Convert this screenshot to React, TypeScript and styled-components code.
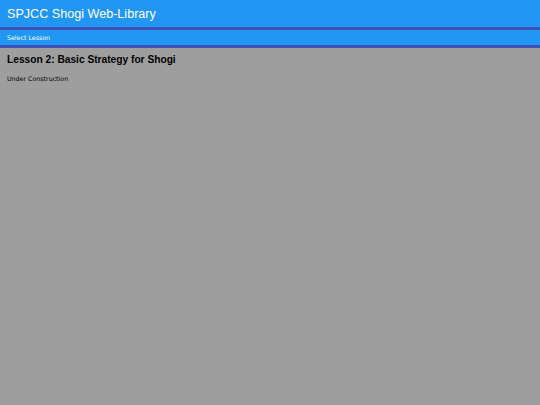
import React from "react";
import styled, { createGlobalStyle } from "styled-components";

const Global = createGlobalStyle`
  html, body { margin: 0; padding: 0; background: #9e9e9e; }
  body { font-family: "Liberation Sans", Arial, sans-serif; }
`;

const Page = styled.div`
  min-height: 405px;
  background: #9e9e9e;
`;

const Header = styled.header`
  height: 27px;
  background: #2196f3;
  border-bottom: 3px solid #3f51b5;
  display: flex;
  align-items: center;
  padding: 0 7px;
`;

const Title = styled.h1`
  margin: 0;
  font-family: "Liberation Sans", Arial, sans-serif;
  font-weight: normal;
  font-size: 12.6px;
  color: #ffffff;
`;

const Nav = styled.nav`
  height: 15px;
  background: #2196f3;
  border-bottom: 3px solid #3f51b5;
  display: flex;
  align-items: center;
  padding: 0 7px;
`;

const NavItem = styled.span`
  font-family: "DejaVu Sans", Verdana, sans-serif;
  font-size: 6.3px;
  color: #ffffff;
`;

const Content = styled.main`
  padding: 6px 7px;
`;

const Heading = styled.h2`
  margin: 0 0 10px;
  font-family: "Liberation Sans", Arial, sans-serif;
  font-weight: bold;
  font-size: 10.2px;
  color: #000000;
`;

const Text = styled.p`
  margin: 0;
  font-family: "DejaVu Sans", Verdana, sans-serif;
  font-size: 6.3px;
  color: #000000;
`;

export default function App() {
  return (
    <Page>
      <Global />
      <Header>
        <Title>SPJCC Shogi Web-Library</Title>
      </Header>
      <Nav>
        <NavItem>Select Lesson</NavItem>
      </Nav>
      <Content>
        <Heading>Lesson 2: Basic Strategy for Shogi</Heading>
        <Text>Under Construction</Text>
      </Content>
    </Page>
  );
}
